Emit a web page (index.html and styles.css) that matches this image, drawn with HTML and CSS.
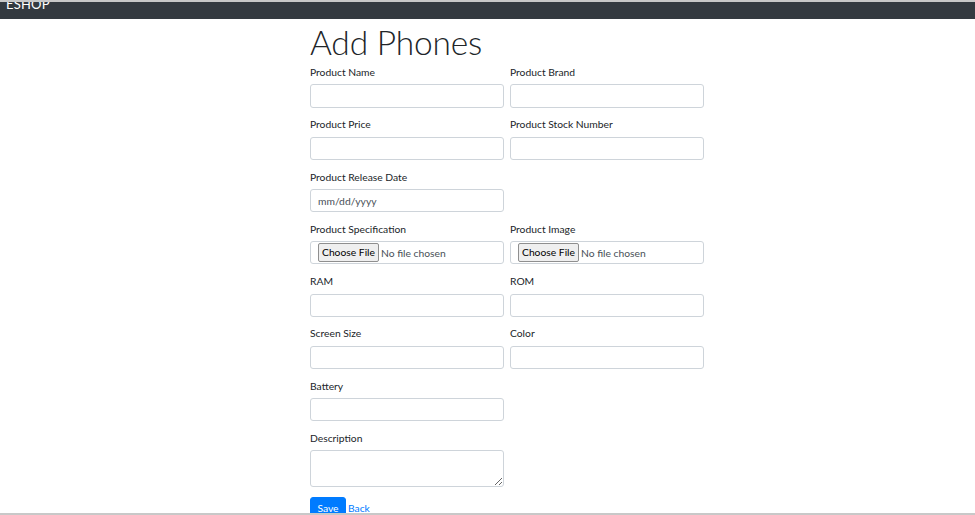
FILE: index.html
```html
<!DOCTYPE html>
<html lang="en">
<head>
<meta charset="utf-8">
<title>Add Phones</title>
<link rel="stylesheet" href="styles.css">
</head>
<body>
<div class="frame">
  <nav class="navbar"><span class="brand">ESHOP</span></nav>
  <main class="page">
    <div class="content">
      <h1 class="title">Add Phones</h1>
      <form class="form">
        <div class="row">
          <div class="group"><label class="label">Product Name</label><input class="control" type="text"></div>
          <div class="group"><label class="label">Product Brand</label><input class="control" type="text"></div>
        </div>
        <div class="row">
          <div class="group"><label class="label">Product Price</label><input class="control" type="text"></div>
          <div class="group"><label class="label">Product Stock Number</label><input class="control" type="text"></div>
        </div>
        <div class="row">
          <div class="group"><label class="label">Product Release Date</label><div class="control fake"><span class="placeholder">mm/dd/yyyy</span></div></div>
        </div>
        <div class="row">
          <div class="group"><label class="label">Product Specification</label><div class="control fake"><span class="filebtn">Choose File</span><span class="filetxt">No file chosen</span></div></div>
          <div class="group"><label class="label">Product Image</label><div class="control fake"><span class="filebtn">Choose File</span><span class="filetxt">No file chosen</span></div></div>
        </div>
        <div class="row">
          <div class="group"><label class="label">RAM</label><input class="control" type="text"></div>
          <div class="group"><label class="label">ROM</label><input class="control" type="text"></div>
        </div>
        <div class="row">
          <div class="group"><label class="label">Screen Size</label><input class="control" type="text"></div>
          <div class="group"><label class="label">Color</label><input class="control" type="text"></div>
        </div>
        <div class="row">
          <div class="group"><label class="label">Battery</label><input class="control" type="text"></div>
        </div>
        <div class="row">
          <div class="group"><label class="label">Description</label><textarea class="control area"></textarea></div>
        </div>
        <div class="actions">
          <button type="button" class="btn">Save</button>
          <a class="link" href="#">Back</a>
        </div>
      </form>
    </div>
  </main>
  <div class="bottomline"></div>
</div>
</body>
</html>
```
FILE: styles.css
```css
* { box-sizing: border-box; }
html, body { margin: 0; padding: 0; }
body {
  font-family: Lato, "Open Sans", sans-serif;
  color: #212529;
  background: #fff;
  width: 975px;
  height: 515px;
  overflow: hidden;
}
.frame {
  height: 515px;
  display: flex;
  flex-direction: column;
  border-top: 2px solid #c8c8c8;
}
.navbar {
  height: 17px;
  background: #343a40;
  overflow: hidden;
  padding-left: 6px;
  flex: none;
}
.brand {
  display: block;
  color: #fff;
  font-size: 13px;
  line-height: 13px;
  margin-top: -4px;
  letter-spacing: 0.2px;
}
.page {
  flex: 1;
  overflow: hidden;
  min-height: 0;
}
.content {
  margin-left: 310px;
  width: 394px;
}
.title {
  margin: 0 0 2px 0;
  font-weight: 300;
  font-size: 33.5px;
  line-height: 42px;
  padding-top: 2px;
  color: #212529;
  letter-spacing: -0.2px;
}
.row {
  display: flex;
  gap: 6px;
}
.group {
  width: 194px;
  margin-bottom: 9.6px;
  display: flex;
  flex-direction: column;
}
.label {
  font-size: 10.3px;
  line-height: 14.6px;
  margin-bottom: 4.9px;
  color: #212529;
}
.control {
  width: 194px;
  height: 23.2px;
  border: 1px solid #ced4da;
  border-radius: 3px;
  background: #fff;
  font-family: inherit;
  font-size: 10px;
  color: #495057;
  padding: 0 7px;
  margin: 0;
}
.fake {
  display: flex;
  align-items: center;
}
.placeholder {
  font-size: 10.3px;
  color: #495057;
}
.filebtn {
  font-size: 10.3px;
  color: #000;
  background: #efefef;
  border: 1px solid #8f8f8f;
  border-radius: 2px;
  padding: 1px 3px;
  line-height: 15px;
  margin-right: 2px;
  white-space: nowrap;
}
.filetxt {
  font-size: 10.3px;
  color: #495057;
}
.area {
  height: 37px;
  resize: vertical;
}
.actions {
  display: flex;
  align-items: flex-start;
  gap: 2px;
}
.btn {
  background: #007bff;
  color: #fff;
  border: 1px solid #007bff;
  border-radius: 3px;
  font-family: inherit;
  font-size: 10.3px;
  height: 23px;
  width: 36px;
  padding: 0;
  line-height: 21px;
  text-align: center;
}
.link {
  color: #007bff;
  text-decoration: none;
  font-size: 10.3px;
  line-height: 23px;
}
.bottomline {
  height: 2px;
  background: #c8c8c8;
  flex: none;
}
```
